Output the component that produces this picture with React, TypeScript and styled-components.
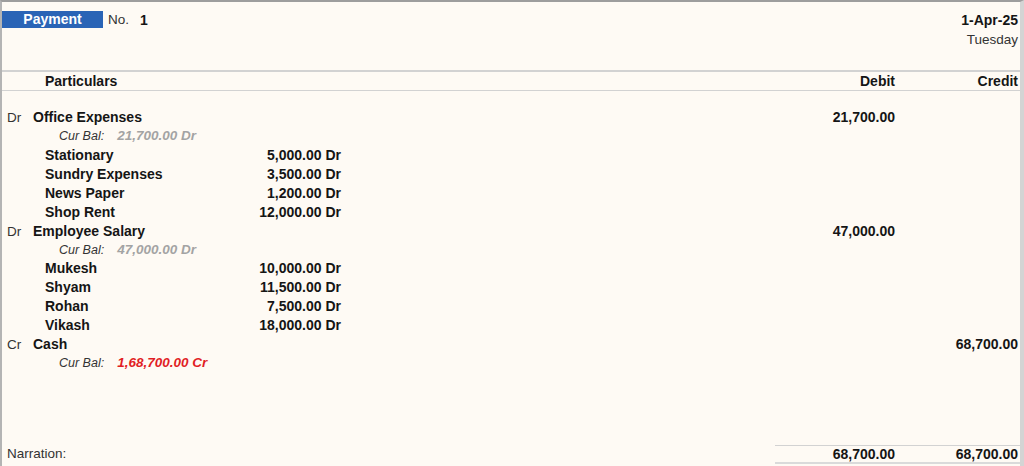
import React from 'react'
import styled, { createGlobalStyle } from 'styled-components'

const COLOR = {
  bg: '#fefaf4',
  text: '#151515',
  soft: '#333333',
  grey: '#a3a3a3',
  red: '#e11d24',
  blue: '#2a64b6',
  line: '#d2d2d2',
  edge: '#9d9d9d',
}

type Sub = { name: string; amount: string }
type Entry = {
  side: 'Dr' | 'Cr'
  ledger: string
  curBal: string
  negative?: boolean
  debit?: string
  credit?: string
  subs: Sub[]
}

const entries: Entry[] = [
  {
    side: 'Dr',
    ledger: 'Office Expenses',
    curBal: '21,700.00 Dr',
    debit: '21,700.00',
    subs: [
      { name: 'Stationary', amount: '5,000.00 Dr' },
      { name: 'Sundry Expenses', amount: '3,500.00 Dr' },
      { name: 'News Paper', amount: '1,200.00 Dr' },
      { name: 'Shop Rent', amount: '12,000.00 Dr' },
    ],
  },
  {
    side: 'Dr',
    ledger: 'Employee Salary',
    curBal: '47,000.00 Dr',
    debit: '47,000.00',
    subs: [
      { name: 'Mukesh', amount: '10,000.00 Dr' },
      { name: 'Shyam', amount: '11,500.00 Dr' },
      { name: 'Rohan', amount: '7,500.00 Dr' },
      { name: 'Vikash', amount: '18,000.00 Dr' },
    ],
  },
  {
    side: 'Cr',
    ledger: 'Cash',
    curBal: '1,68,700.00 Cr',
    negative: true,
    credit: '68,700.00',
    subs: [],
  },
]

const GlobalStyle = createGlobalStyle`
  html, body {
    margin: 0;
    padding: 0;
    background: ${COLOR.bg};
  }
  body {
    font-family: "Liberation Sans", Arial, sans-serif;
    font-size: 13.5px;
    color: ${COLOR.text};
  }
`

const Page = styled.div`
  box-sizing: border-box;
  width: 1024px;
  height: 466px;
  display: flex;
  flex-direction: column;
  background: ${COLOR.bg};
  border-top: 2px solid ${COLOR.edge};
  border-left: 2px solid #b4b4b4;
  border-right: 4px solid #d4d4d4;
  overflow: hidden;
`

const Top = styled.div`
  height: 68px;
  display: flex;
  justify-content: space-between;
  align-items: flex-start;
`

const VoucherLine = styled.div`
  display: flex;
  align-items: center;
  margin-top: 9px;
  height: 17px;
`

const Badge = styled.div`
  width: 101px;
  height: 17px;
  background: ${COLOR.blue};
  color: #fff;
  font-weight: 700;
  font-size: 14px;
  line-height: 17px;
  text-align: center;
`

const NoLabel = styled.span`
  margin-left: 5px;
  color: ${COLOR.soft};
  font-size: 13.5px;
`

const NoValue = styled.span`
  margin-left: 11px;
  font-weight: 700;
  font-size: 14px;
`

const DateBlock = styled.div`
  margin-top: 8px;
  padding-right: 2px;
  text-align: right;
  line-height: 20px;
`

const DateText = styled.div`
  font-weight: 700;
  font-size: 14px;
`

const DayText = styled.div`
  color: ${COLOR.soft};
  font-size: 13.5px;
`

const Grid = styled.div`
  display: grid;
  grid-template-columns: 1fr 125px 123px;
  align-items: center;
`

const HeadRow = styled(Grid)`
  height: 18px;
  border-top: 2px solid ${COLOR.line};
  border-bottom: 1px solid ${COLOR.line};
  font-weight: 700;
  font-size: 14px;
  line-height: 18px;
`

const HeadCell = styled.div<{ $right?: boolean }>`
  text-align: ${(p) => (p.$right ? 'right' : 'left')};
  padding: ${(p) => (p.$right ? '0 2px 0 0' : '0 0 0 43px')};
`

const Body = styled.div`
  flex: 1;
  padding-top: 17px;
`

const Row = styled(Grid)`
  height: 19px;
  line-height: 19px;
`

const Particular = styled.div`
  display: flex;
  padding-left: 5px;
`

const Side = styled.span`
  width: 26px;
  color: ${COLOR.soft};
  font-size: 13.5px;
`

const Ledger = styled.span`
  font-weight: 700;
  font-size: 14px;
`

const Amount = styled.div`
  text-align: right;
  padding-right: 2px;
  font-weight: 700;
  font-size: 14px;
`

const BalRow = styled.div`
  height: 18.5px;
  line-height: 18.5px;
  padding-left: 57px;
  font-style: italic;
`

const BalLabel = styled.span`
  color: ${COLOR.soft};
  font-size: 12.5px;
`

const BalValue = styled.span<{ $negative?: boolean }>`
  margin-left: 13px;
  font-weight: 700;
  font-size: 13.5px;
  color: ${(p) => (p.$negative ? COLOR.red : COLOR.grey)};
`

const SubRow = styled.div`
  display: grid;
  grid-template-columns: 200px 96px;
  height: 19px;
  line-height: 19px;
  padding-left: 43px;
  font-weight: 700;
  font-size: 14px;
`

const SubAmount = styled.span`
  text-align: right;
`

const Footer = styled(Grid)`
  margin-bottom: 2px;
  align-items: stretch;
`

const Narration = styled.div`
  padding: 1px 0 0 5px;
  line-height: 16px;
  color: ${COLOR.soft};
  font-size: 13.5px;
`

const Total = styled.div<{ $inset?: boolean }>`
  margin-left: ${(p) => (p.$inset ? '3px' : '0')};
  padding-right: 2px;
  text-align: right;
  font-weight: 700;
  font-size: 14px;
  line-height: 16px;
  border-top: 1px solid ${COLOR.line};
  border-bottom: 2px solid #dadada;
`

const App: React.FC = () => {
  return (
    <Page>
      <GlobalStyle />
      <Top>
        <VoucherLine>
          <Badge>Payment</Badge>
          <NoLabel>No.</NoLabel>
          <NoValue>1</NoValue>
        </VoucherLine>
        <DateBlock>
          <DateText>1-Apr-25</DateText>
          <DayText>Tuesday</DayText>
        </DateBlock>
      </Top>
      <HeadRow>
        <HeadCell>Particulars</HeadCell>
        <HeadCell $right>Debit</HeadCell>
        <HeadCell $right>Credit</HeadCell>
      </HeadRow>
      <Body>
        {entries.map((e) => (
          <div key={e.ledger}>
            <Row>
              <Particular>
                <Side>{e.side}</Side>
                <Ledger>{e.ledger}</Ledger>
              </Particular>
              <Amount>{e.debit}</Amount>
              <Amount>{e.credit}</Amount>
            </Row>
            <BalRow>
              <BalLabel>Cur Bal:</BalLabel>
              <BalValue $negative={e.negative}>{e.curBal}</BalValue>
            </BalRow>
            {e.subs.map((s) => (
              <SubRow key={s.name}>
                <span>{s.name}</span>
                <SubAmount>{s.amount}</SubAmount>
              </SubRow>
            ))}
          </div>
        ))}
      </Body>
      <Footer>
        <Narration>Narration:</Narration>
        <Total $inset>68,700.00</Total>
        <Total>68,700.00</Total>
      </Footer>
    </Page>
  )
}

export default App
